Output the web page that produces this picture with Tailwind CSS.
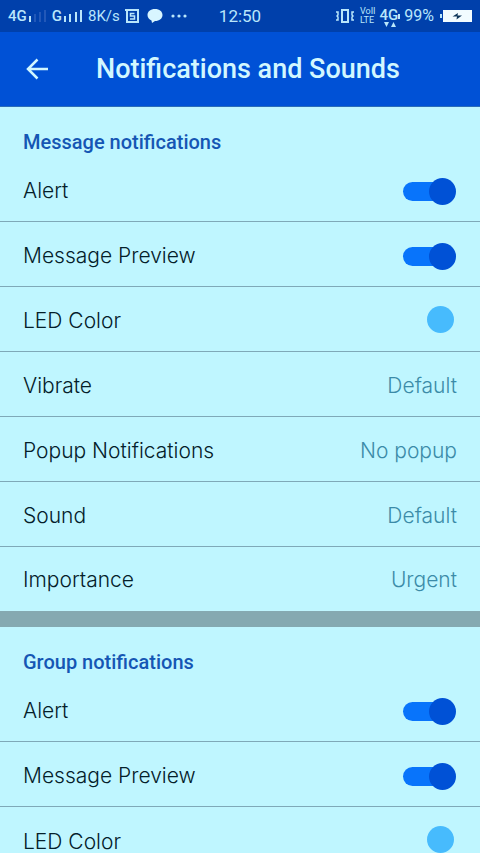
<!DOCTYPE html>
<html lang="en">
<head>
    <meta charset="UTF-8">
    <meta name="viewport" content="width=device-width, initial-scale=1.0">
    <title>Notifications and Sounds</title>
    <script src="https://cdn.jsdelivr.net/npm/@tailwindcss/browser@4"></script>
</head>
<body class="h-screen flex flex-col overflow-hidden bg-[#bff6ff] font-['Inter',sans-serif] text-[#04202a]">
    <!-- Status bar -->
    <div class="h-8 shrink-0 grid grid-cols-[1fr_auto_1fr] items-center bg-[#0040ab] px-2 text-[#b9e6fb] font-['Roboto',sans-serif] text-base leading-8">
        <div class="flex items-center gap-[5px]">
            <div class="flex items-center gap-[2px]">
                <span class="text-[15px] font-medium">4G</span>
                <svg class="w-[18px] h-3" viewBox="0 0 18 12">
                    <path fill="#b9e6fb" d="M0 6h2v6H0z"/>
                    <path fill="#2258b8" d="M5 4h2v8H5zM10 2h2v10h-2zM15 0h2v12h-2z"/>
                </svg>
            </div>
            <div class="flex items-center gap-[2px]">
                <span class="text-[15px] font-medium">G</span>
                <svg class="w-[19px] h-3" viewBox="0 0 19 12" fill="#b9e6fb">
                    <path d="M0 6h2v6H0zM5 4h2v8H5zM11 2h2v10h-2zM16 0h2v12h-2z"/>
                </svg>
            </div>
            <span class="text-[15px]">8K/s</span>
            <svg class="w-[14px] h-4" viewBox="0 0 14 16" fill="none" stroke="#b9e6fb">
                <path stroke-width="2" d="M0 2h13v12H2V1"/>
                <path stroke-width="1.5" d="M9.5 5.5H5.500v2.500h4v3H5"/>
            </svg>
            <svg class="w-4 h-[14px] ml-[3px]" viewBox="0 0 16 14" fill="#d8f5ff">
                <path d="M8 0c4.500 0 7.500 2.600 7.500 6S12.500 12 8 12l-3 2-.5-2.500C2 10.500.500 8.500.500 6c0-3.400 3-6 7.500-6z"/>
            </svg>
            <svg class="w-4 h-1 ml-[3px]" viewBox="0 0 16 4" fill="#b9e6fb">
                <circle cx="2" cy="2" r="1.600"/><circle cx="8" cy="2" r="1.600"/><circle cx="14" cy="2" r="1.600"/>
            </svg>
        </div>
        <time class="text-[17px] leading-8">12:50</time>
        <div class="flex items-center justify-end gap-1">
            <svg class="w-[18px] h-[14px] mr-[2px]" viewBox="0 0 18 14" fill="none" stroke="#b9e6fb">
                <path stroke-width="2" d="M6 1h6v12H6z"/>
                <path stroke-width="1.500" d="M0 3h2v3l-1 1 1 1v3H0M18 3h-2v3l1 1-1 1v3h2"/>
            </svg>
            <span class="flex flex-col text-[9px] leading-[9px]"><span>VoII</span><span>LTE</span></span>
            <span class="flex flex-col items-center pt-[2px]">
                <span class="flex items-end text-[15px] leading-[14px] font-medium">4G<i class="w-[2px] h-[5px] mb-[3px] bg-[#b9e6fb]"></i></span>
                <svg class="w-3 h-[5px]" viewBox="0 0 12 5" fill="#b9e6fb"><path d="M0 0h5L2.500 5zM7 5h5L9.500 0z"/></svg>
            </span>
            <span>99%</span>
            <svg class="w-[32px] h-[14px] ml-[2px]" viewBox="0 0 32 14">
                <path fill="#b9e6fb" d="M0 5h2v4H0z"/>
                <path fill="#f2fcff" d="M3 1h29v12H3z"/>
                <path fill="#0c3558" d="M18 4l-5.500 3.500H17L16.500 10.500 22 6.500h-4.500z"/>
            </svg>
        </div>
    </div>

    <!-- Title bar -->
    <header class="h-[75px] shrink-0 flex items-center gap-12 bg-[#0051d6] border-b border-[#2a6cb8] px-[26px] text-[#d2f7ff]">
        <button aria-label="Back">
            <svg class="w-[22px] h-[22px]" viewBox="0 0 22 22" fill="none" stroke="currentColor" stroke-width="2.500">
                <path d="M22 11H2M11.500 1.500L2 11l9.500 9.500"/>
            </svg>
        </button>
        <h1 class="font-['Roboto',sans-serif] font-medium text-[27px] leading-8">Notifications and Sounds</h1>
    </header>

    <main class="flex-1 overflow-y-auto [scrollbar-width:none]">
        <!-- Message notifications -->
        <section class="border-b-16 border-[#85a9b1]">
            <h2 class="h-[50px] pt-5 px-[23px] font-['Roboto',sans-serif] font-medium text-xl leading-[30px] text-[#1556b4]">Message notifications</h2>
            <div class="divide-y divide-[#7fa9b8] text-[21px] leading-8 font-[350]">
                <label class="h-[65px] flex items-center justify-between px-[23px] pt-1">
                    Alert
                    <input type="checkbox" role="switch" checked class="appearance-none relative w-[53px] h-[27px] mr-px before:absolute before:left-0 before:top-1 before:w-11 before:h-[19px] before:rounded-full before:bg-[#0874fb] after:absolute after:right-0 after:top-0 after:size-[27px] after:rounded-full after:bg-[#0051d6]">
                </label>
                <label class="h-[65px] flex items-center justify-between px-[23px] pt-1">
                    Message Preview
                    <input type="checkbox" role="switch" checked class="appearance-none relative w-[53px] h-[27px] mr-px before:absolute before:left-0 before:top-1 before:w-11 before:h-[19px] before:rounded-full before:bg-[#0874fb] after:absolute after:right-0 after:top-0 after:size-[27px] after:rounded-full after:bg-[#0051d6]">
                </label>
                <button class="w-full h-[65px] flex items-center justify-between px-[23px] pt-1">
                    LED Color
                    <span class="size-[27px] mr-[3px] mb-1 rounded-full bg-[#47bbfd]"></span>
                </button>
                <button class="w-full h-[65px] flex items-center justify-between px-[23px] pt-1">
                    Vibrate <span class="text-[#3b8ba8]">Default</span>
                </button>
                <button class="w-full h-[65px] flex items-center justify-between px-[23px] pt-1">
                    Popup Notifications <span class="text-[#3b8ba8]">No popup</span>
                </button>
                <button class="w-full h-[65px] flex items-center justify-between px-[23px] pt-1">
                    Sound <span class="text-[#3b8ba8]">Default</span>
                </button>
                <button class="w-full h-16 flex items-center justify-between px-[23px] pt-[2px]">
                    Importance <span class="text-[#3b8ba8]">Urgent</span>
                </button>
            </div>
        </section>

        <!-- Group notifications -->
        <section>
            <h2 class="h-[50px] pt-5 px-[23px] font-['Roboto',sans-serif] font-medium text-xl leading-[30px] text-[#1556b4]">Group notifications</h2>
            <div class="divide-y divide-[#7fa9b8] text-[21px] leading-8 font-[350]">
                <label class="h-[65px] flex items-center justify-between px-[23px] pt-1">
                    Alert
                    <input type="checkbox" role="switch" checked class="appearance-none relative w-[53px] h-[27px] mr-px before:absolute before:left-0 before:top-1 before:w-11 before:h-[19px] before:rounded-full before:bg-[#0874fb] after:absolute after:right-0 after:top-0 after:size-[27px] after:rounded-full after:bg-[#0051d6]">
                </label>
                <label class="h-[65px] flex items-center justify-between px-[23px] pt-1">
                    Message Preview
                    <input type="checkbox" role="switch" checked class="appearance-none relative w-[53px] h-[27px] mr-px before:absolute before:left-0 before:top-1 before:w-11 before:h-[19px] before:rounded-full before:bg-[#0874fb] after:absolute after:right-0 after:top-0 after:size-[27px] after:rounded-full after:bg-[#0051d6]">
                </label>
                <button class="w-full h-[65px] flex items-center justify-between px-[23px] pt-1">
                    LED Color
                    <span class="size-[27px] mr-[3px] mb-1 rounded-full bg-[#47bbfd]"></span>
                </button>
            </div>
        </section>
    </main>
</body>
</html>
